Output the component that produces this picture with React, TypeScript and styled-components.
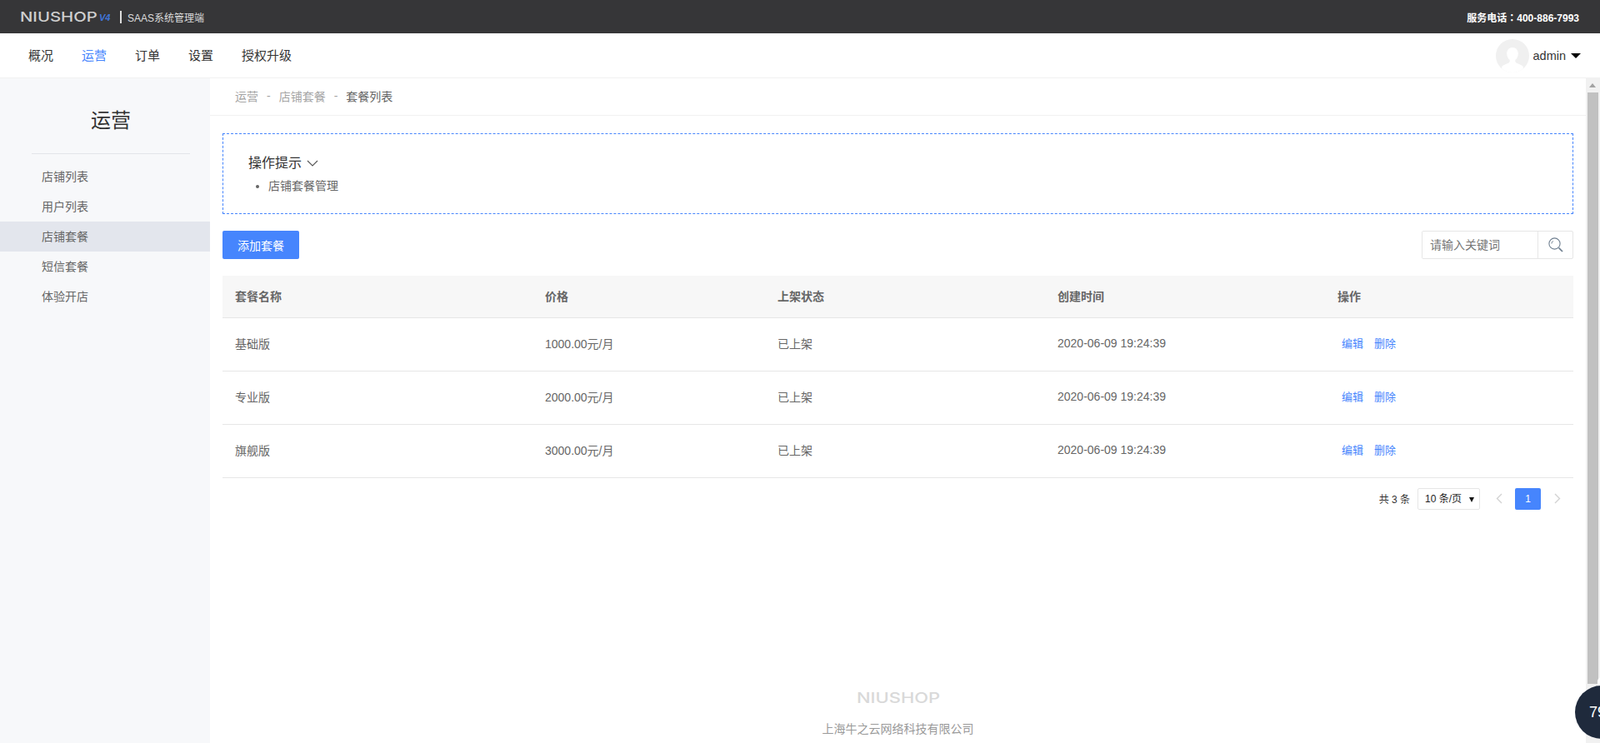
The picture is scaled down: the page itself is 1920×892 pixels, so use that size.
import styled, { createGlobalStyle } from "styled-components";

const BLUE = "#4685fd";

const menus = ["概况", "运营", "订单", "设置", "授权升级"];
const sideItems = ["店铺列表", "用户列表", "店铺套餐", "短信套餐", "体验开店"];
const rows = [
  { name: "基础版", price: "1000.00元/月" },
  { name: "专业版", price: "2000.00元/月" },
  { name: "旗舰版", price: "3000.00元/月" },
];

export default function App() {
  return (
    <Page>
      <GlobalStyle />
      <TopBar>
        <Brand>
          <LogoText>NIUSHOP</LogoText>
          <LogoVersion>V4</LogoVersion>
          <BrandBar />
          <BrandName>SAAS系统管理端</BrandName>
        </Brand>
        <Phone>服务电话：400-886-7993</Phone>
      </TopBar>

      <NavBar>
        <NavList>
          {menus.map((m) => (
            <NavItem key={m} $active={m === "运营"}>
              {m}
            </NavItem>
          ))}
        </NavList>
        <UserBox>
          <Avatar />
          <UserName>admin</UserName>
          <UserCaret />
        </UserBox>
      </NavBar>

      <Body>
        <Sidebar>
          <SideTitle>运营</SideTitle>
          <SideRule />
          {sideItems.map((s) => (
            <SideItem key={s} $active={s === "店铺套餐"}>
              {s}
            </SideItem>
          ))}
        </Sidebar>

        <Main>
          <Crumbs>
            <CrumbLink>运营</CrumbLink>
            <CrumbDash>-</CrumbDash>
            <CrumbLink>店铺套餐</CrumbLink>
            <CrumbDash>-</CrumbDash>
            <CrumbNow>套餐列表</CrumbNow>
          </Crumbs>

          <Content>
            <Tips>
              <TipsTitle>
                操作提示
                <svg width="14" height="8" viewBox="0 0 14 8" fill="none">
                  <path d="M1 1l6 6 6-6" stroke="#555" strokeWidth="1.100" />
                </svg>
              </TipsTitle>
              <TipsList>
                <li>店铺套餐管理</li>
              </TipsList>
            </Tips>

            <Toolbar>
              <AddButton>添加套餐</AddButton>
              <Search>
                <SearchInput placeholder="请输入关键词" />
                <SearchButton>
                  <svg width="18" height="18" viewBox="0 0 18 18" fill="none" stroke="#6f7f90">
                    <circle cx="7.500" cy="7.500" r="6.600" strokeWidth="1.100" />
                    <path d="M3.900 7.500a3.600 3.600 0 0 1 2-3.200" strokeWidth="1" />
                    <path d="m12.600 12.600 4.400 4.400" strokeWidth="1.700" />
                  </svg>
                </SearchButton>
              </Search>
            </Toolbar>

            <Table>
              <colgroup>
                <col width="372" />
                <col width="279" />
                <col width="336" />
                <col width="336" />
                <col />
              </colgroup>
              <thead>
                <tr>
                  <Th>套餐名称</Th>
                  <Th>价格</Th>
                  <Th>上架状态</Th>
                  <Th>创建时间</Th>
                  <Th>操作</Th>
                </tr>
              </thead>
              <tbody>
                {rows.map((r) => (
                  <tr key={r.name}>
                    <Td>{r.name}</Td>
                    <Td>{r.price}</Td>
                    <Td>已上架</Td>
                    <Td>2020-06-09 19:24:39</Td>
                    <Td>
                      <ActionLink>编辑</ActionLink>
                      <ActionLink>删除</ActionLink>
                    </Td>
                  </tr>
                ))}
              </tbody>
            </Table>

            <Pager>
              <PagerTotal>共 3 条</PagerTotal>
              <PageSize>
                10 条/页
                <PageSizeCaret />
              </PageSize>
              <PageArrow>
                <svg width="8" height="13" viewBox="0 0 8 13" fill="none">
                  <path d="M7 1 1.500 6.500 7 12" stroke="#d2d2d2" strokeWidth="1.400" />
                </svg>
              </PageArrow>
              <PageNum>1</PageNum>
              <PageArrow>
                <svg width="8" height="13" viewBox="0 0 8 13" fill="none">
                  <path d="m1 1 5.500 5.500L1 12" stroke="#d2d2d2" strokeWidth="1.400" />
                </svg>
              </PageArrow>
            </Pager>
          </Content>

          <Footer>
            <FooterLogo>NIUSHOP</FooterLogo>
            <FooterText>上海牛之云网络科技有限公司</FooterText>
          </Footer>
        </Main>

        <ScrollTrack>
          <ScrollArrow />
          <ScrollThumb />
        </ScrollTrack>
      </Body>

      <BubbleTab />
      <FloatBubble>79</FloatBubble>
    </Page>
  );
}

function Avatar() {
  return (
    <svg width="40" height="40" viewBox="0 0 40 40">
      <clipPath id="avatar-clip">
        <circle cx="20" cy="20" r="20" />
      </clipPath>
      <g clipPath="url(#avatar-clip)">
        <rect width="40" height="40" fill="#f0f0f0" />
        <path
          fill="#fff"
          d="M20 10c-4.200 0-6.800 3.200-6.800 7.200 0 3.400 1.500 6.200 3.500 7.800.3 1.800-.3 3-1.700 3.700-2.200 1-5.800 2-8 4.300V40h26v-7c-2.200-2.300-5.800-3.300-8-4.300-1.400-.7-2-1.900-1.700-3.700 2-1.600 3.500-4.400 3.500-7.800 0-4-2.600-7.200-6.800-7.200z"
        />
      </g>
    </svg>
  );
}

const GlobalStyle = createGlobalStyle`
  html, body {
    margin: 0;
    height: 100%;
    overflow: hidden;
  }
  body {
    font-family: "Liberation Sans", "Noto Sans CJK SC", sans-serif;
    font-size: 14px;
    color: #666;
    background: #fff;
  }
`;

const Page = styled.div`
  height: 100vh;
  display: flex;
  flex-direction: column;
`;

const TopBar = styled.header`
  height: 40px;
  flex: none;
  background: #363638;
  display: flex;
  align-items: center;
  justify-content: space-between;
  padding: 0 25px 0 24px;
`;

const Brand = styled.div`
  display: flex;
  align-items: center;
`;

const LogoText = styled.span`
  width: 93px;
  font-family: "Inter", sans-serif;
  font-size: 16px;
  font-weight: 500;
  line-height: 20px;
  color: #cfcfcf;
  white-space: nowrap;
  transform: scaleX(1.27);
  transform-origin: left center;
`;

const LogoVersion = styled.span`
  width: 25px;
  margin-left: 2px;
  font-size: 11px;
  font-weight: 700;
  font-style: italic;
  color: #3f74d9;
  padding-top: 2px;
`;

const BrandBar = styled.span`
  width: 2px;
  height: 15px;
  margin-right: 7px;
  background: #ddd;
`;

const BrandName = styled.span`
  font-size: 12px;
  color: #ddd;
`;

const Phone = styled.span`
  font-family: "Liberation Sans", "Noto Sans CJK TC", sans-serif;
  font-size: 12px;
  font-weight: 700;
  color: #fff;
`;

const NavBar = styled.nav`
  height: 54px;
  flex: none;
  box-sizing: border-box;
  border-bottom: 1px solid #f1f1f1;
  display: flex;
  align-items: center;
  justify-content: space-between;
  padding: 0 23px 0 17px;
`;

const NavList = styled.div`
  display: flex;
  padding-bottom: 2px;
`;

const NavItem = styled.span<{ $active?: boolean }>`
  padding: 0 17px;
  font-size: 15px;
  color: ${(p) => (p.$active ? BLUE : "#333")};
`;

const UserBox = styled.div`
  display: flex;
  align-items: center;
`;

const UserName = styled.span`
  margin-left: 5px;
  font-size: 14.500px;
  color: #333;
`;

const UserCaret = styled.span`
  margin-left: 6px;
  margin-top: 1px;
  border-top: 6px solid #000;
  border-left: 6px solid transparent;
  border-right: 6px solid transparent;
`;

const Body = styled.div`
  flex: 1;
  min-height: 0;
  display: flex;
`;

const Sidebar = styled.aside`
  width: 252px;
  flex: none;
  background: #f7f8fa;
`;

const SideTitle = styled.h2`
  margin: 0 24px 0 38px;
  padding: 33px 0 21px;
  font-size: 24px;
  font-weight: 400;
  line-height: 36px;
  text-align: center;
  color: #333;
`;

const SideRule = styled.div`
  height: 1px;
  margin: 0 24px 9px 38px;
  background: #e3e5e9;
`;

const SideItem = styled.div<{ $active?: boolean }>`
  height: 36px;
  line-height: 36px;
  padding-left: 50px;
  color: #666;
  background: ${(p) => (p.$active ? "#e3e6ed" : "transparent")};
`;

const Main = styled.main`
  flex: 1;
  min-width: 0;
  overflow: hidden;
`;

const ScrollTrack = styled.div`
  width: 17px;
  flex: none;
  background: #f1f1f1;
  display: flex;
  flex-direction: column;
  align-items: center;
`;

const ScrollArrow = styled.div`
  height: 17px;
  width: 9px;
  &::before {
    content: "";
    display: block;
    margin-top: 6px;
    width: 0;
    border-bottom: 5px solid #a3a3a3;
    border-left: 4.500px solid transparent;
    border-right: 4.500px solid transparent;
  }
`;

const ScrollThumb = styled.div`
  width: 13px;
  height: 710px;
  background: #c1c1c1;
`;

const Crumbs = styled.div`
  height: 45px;
  box-sizing: border-box;
  border-bottom: 1px solid #f1f1f1;
  padding: 0 0 2px 30px;
  display: flex;
  align-items: center;
`;

const CrumbLink = styled.span`
  color: #a5a5a5;
`;

const CrumbDash = styled.span`
  margin: 0 10px;
  color: #a5a5a5;
`;

const CrumbNow = styled.span`
  color: #666;
`;

const Content = styled.div`
  padding: 21px 15px 0;
`;

const Tips = styled.section`
  height: 97px;
  box-sizing: border-box;
  border: 1px dashed ${BLUE};
  padding: 24px 0 0 30px;
`;

const TipsTitle = styled.div`
  display: flex;
  align-items: center;
  gap: 6px;
  font-size: 16px;
  line-height: 22px;
  color: #333;
`;

const TipsList = styled.ul`
  margin: 4px 0 0;
  padding-left: 24px;
  line-height: 24px;
  color: #666;
`;

const Toolbar = styled.div`
  margin-top: 20px;
  display: flex;
  justify-content: space-between;
`;

const AddButton = styled.button`
  width: 92px;
  height: 34px;
  padding: 0;
  border: 0;
  border-radius: 2px;
  background: ${BLUE};
  color: #fff;
  font: inherit;
`;

const Search = styled.div`
  width: 182px;
  height: 34px;
  box-sizing: border-box;
  border: 1px solid #e6e6e6;
  border-radius: 2px;
  display: flex;
`;

const SearchInput = styled.input`
  flex: 1;
  min-width: 0;
  border: 0;
  outline: 0;
  padding: 0 10px 0 9px;
  font: inherit;
  color: #666;
  &::placeholder {
    color: #757575;
  }
`;

const SearchButton = styled.div`
  width: 41px;
  flex: none;
  border-left: 1px solid #e6e6e6;
  display: flex;
  align-items: center;
  justify-content: center;
`;

const Table = styled.table`
  width: 100%;
  margin-top: 20px;
  table-layout: fixed;
  border-collapse: collapse;
`;

const Th = styled.th`
  height: 50px;
  box-sizing: border-box;
  padding: 0 15px 2px;
  background: #f7f7f7;
  border-bottom: 1px solid #e6e6e6;
  text-align: left;
  font-weight: 700;
  color: #666;
`;

const Td = styled.td`
  height: 64px;
  box-sizing: border-box;
  padding: 0 15px 3px;
  border-bottom: 1px solid #e6e6e6;
  color: #666;
`;

const ActionLink = styled.a`
  margin-left: 5px;
  margin-right: 8px;
  font-size: 13px;
  color: ${BLUE};
`;

const Pager = styled.div`
  margin-top: 12px;
  padding-right: 4px;
  display: flex;
  justify-content: flex-end;
  align-items: center;
  gap: 4px;
  font-size: 12px;
  color: #333;
`;

const PagerTotal = styled.span`
  margin-right: 5px;
`;

const PageSize = styled.div`
  position: relative;
  width: 75px;
  height: 26px;
  margin-right: 3px;
  box-sizing: border-box;
  border: 1px solid #e6e6e6;
  border-radius: 2px;
  padding-left: 8px;
  line-height: 24px;
  color: #222;
`;

const PageSizeCaret = styled.span`
  position: absolute;
  right: 6px;
  top: 10px;
  border-top: 6px solid #111;
  border-left: 3px solid transparent;
  border-right: 3px solid transparent;
`;

const PageArrow = styled.span`
  width: 31px;
  height: 26px;
  display: flex;
  align-items: center;
  justify-content: center;
`;

const PageNum = styled.span`
  width: 31px;
  height: 26px;
  border-radius: 2px;
  background: ${BLUE};
  color: #fff;
  line-height: 26px;
  text-align: center;
`;

const Footer = styled.footer`
  margin-top: 216px;
  display: flex;
  flex-direction: column;
  align-items: center;
`;

const FooterLogo = styled.div`
  width: 100px;
  font-family: "Inter", sans-serif;
  font-size: 17px;
  font-weight: 500;
  line-height: 20px;
  color: #d9d9d9;
  white-space: nowrap;
  transform: scaleX(1.29);
  transform-origin: left center;
`;

const FooterText = styled.div`
  margin-top: 17px;
  line-height: 20px;
  color: #999;
`;

const BubbleTab = styled.div`
  position: fixed;
  left: 1917px;
  top: 813px;
  width: 10px;
  height: 20px;
  border-radius: 5px;
  background: #fff;
`;

const FloatBubble = styled.div`
  position: fixed;
  left: 1890px;
  top: 823px;
  width: 64px;
  height: 64px;
  border-radius: 50%;
  background: #1f2a3c;
  color: #fff;
  font-size: 18px;
  line-height: 64px;
  padding-left: 17px;
  box-sizing: border-box;
`;
